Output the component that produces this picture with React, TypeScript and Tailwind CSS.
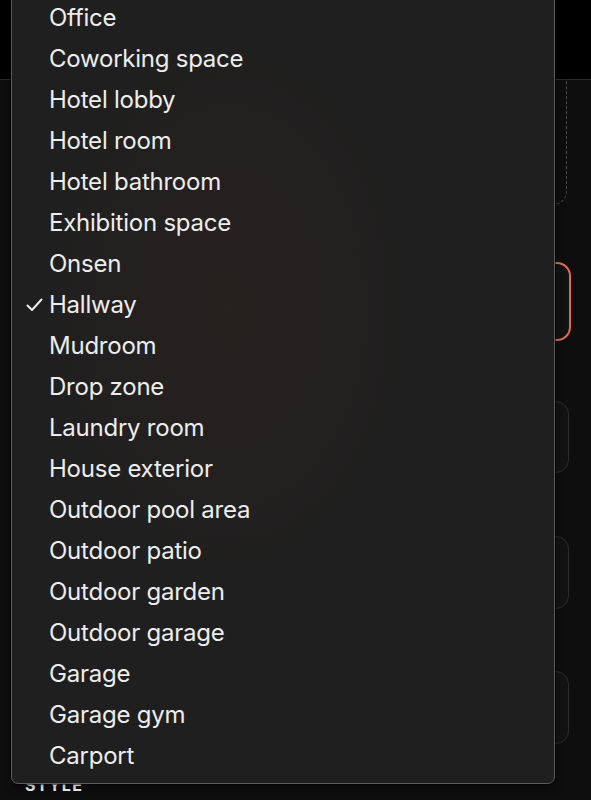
import React from "react";

const items = [
  "Office",
  "Coworking space",
  "Hotel lobby",
  "Hotel room",
  "Hotel bathroom",
  "Exhibition space",
  "Onsen",
  "Hallway",
  "Mudroom",
  "Drop zone",
  "Laundry room",
  "House exterior",
  "Outdoor pool area",
  "Outdoor patio",
  "Outdoor garden",
  "Outdoor garage",
  "Garage",
  "Garage gym",
  "Carport",
];

export default function App() {
  return (
    <div
      className="relative w-[591px] h-[800px] overflow-hidden bg-[#0e0e0e]"
      style={{ fontFamily: "Inter, 'Noto Sans', sans-serif" }}
    >
      <div className="h-[80px] bg-black border-b border-[#2c2c2c]" />
      <div className="flex flex-col pl-[24px] pr-[22px]">
        <div className="mr-[2px] h-[125px] border border-t-0 border-dashed border-[#4a4a4a] rounded-b-[14px]" />
        <div className="-mr-[2px] mt-[57px] h-[79px] rounded-[14px] border-[2.5px] border-[#e06b52] bg-[#121212]" />
        <div className="mt-[60px] h-[72px] rounded-[13px] border border-[#2c2c2c] bg-[#131313]" />
        <div className="mt-[63px] h-[73px] rounded-[13px] border border-[#2c2c2c] bg-[#131313]" />
        <div className="mt-[62px] h-[73px] rounded-[13px] border border-[#2c2c2c] bg-[#131313]" />
        <div className="mt-[29px] pl-[1px] text-[16px] font-bold tracking-[0.08em] text-white">
          STYLE
        </div>
      </div>

      <div className="absolute left-[11px] top-[-10px] w-[544px] rounded-[7px] border border-[#5a5a5a] bg-[#1f1f1f] shadow-[0_0_0_1px_rgba(0,0,0,0.5),0_4px_10px_rgba(0,0,0,0.35)] pt-[6px] pb-[7px] overflow-hidden">
        <div className="pointer-events-none absolute inset-0 bg-[radial-gradient(ellipse_at_40%_40%,rgba(55,40,35,0.3),rgba(0,0,0,0)_45%)]" />
        <ul className="relative">
          {items.map((label) => (
            <li
              key={label}
              className="relative flex items-center h-[41px] pl-[37px] text-[24px] leading-none font-normal tracking-[-0.01em] text-[#ededed]"
            >
              {label === "Hallway" && (
                <span className="absolute left-[14px] top-0 h-full flex items-center">
                  <svg width="17" height="14" viewBox="0 0 17 14" fill="none">
                    <path
                      d="M1.5 7.5 L6 12 L15.5 1.5"
                      stroke="#ececec"
                      strokeWidth="2"
                      strokeLinecap="round"
                      strokeLinejoin="round"
                    />
                  </svg>
                </span>
              )}
              {label}
            </li>
          ))}
        </ul>
      </div>
    </div>
  );
}
